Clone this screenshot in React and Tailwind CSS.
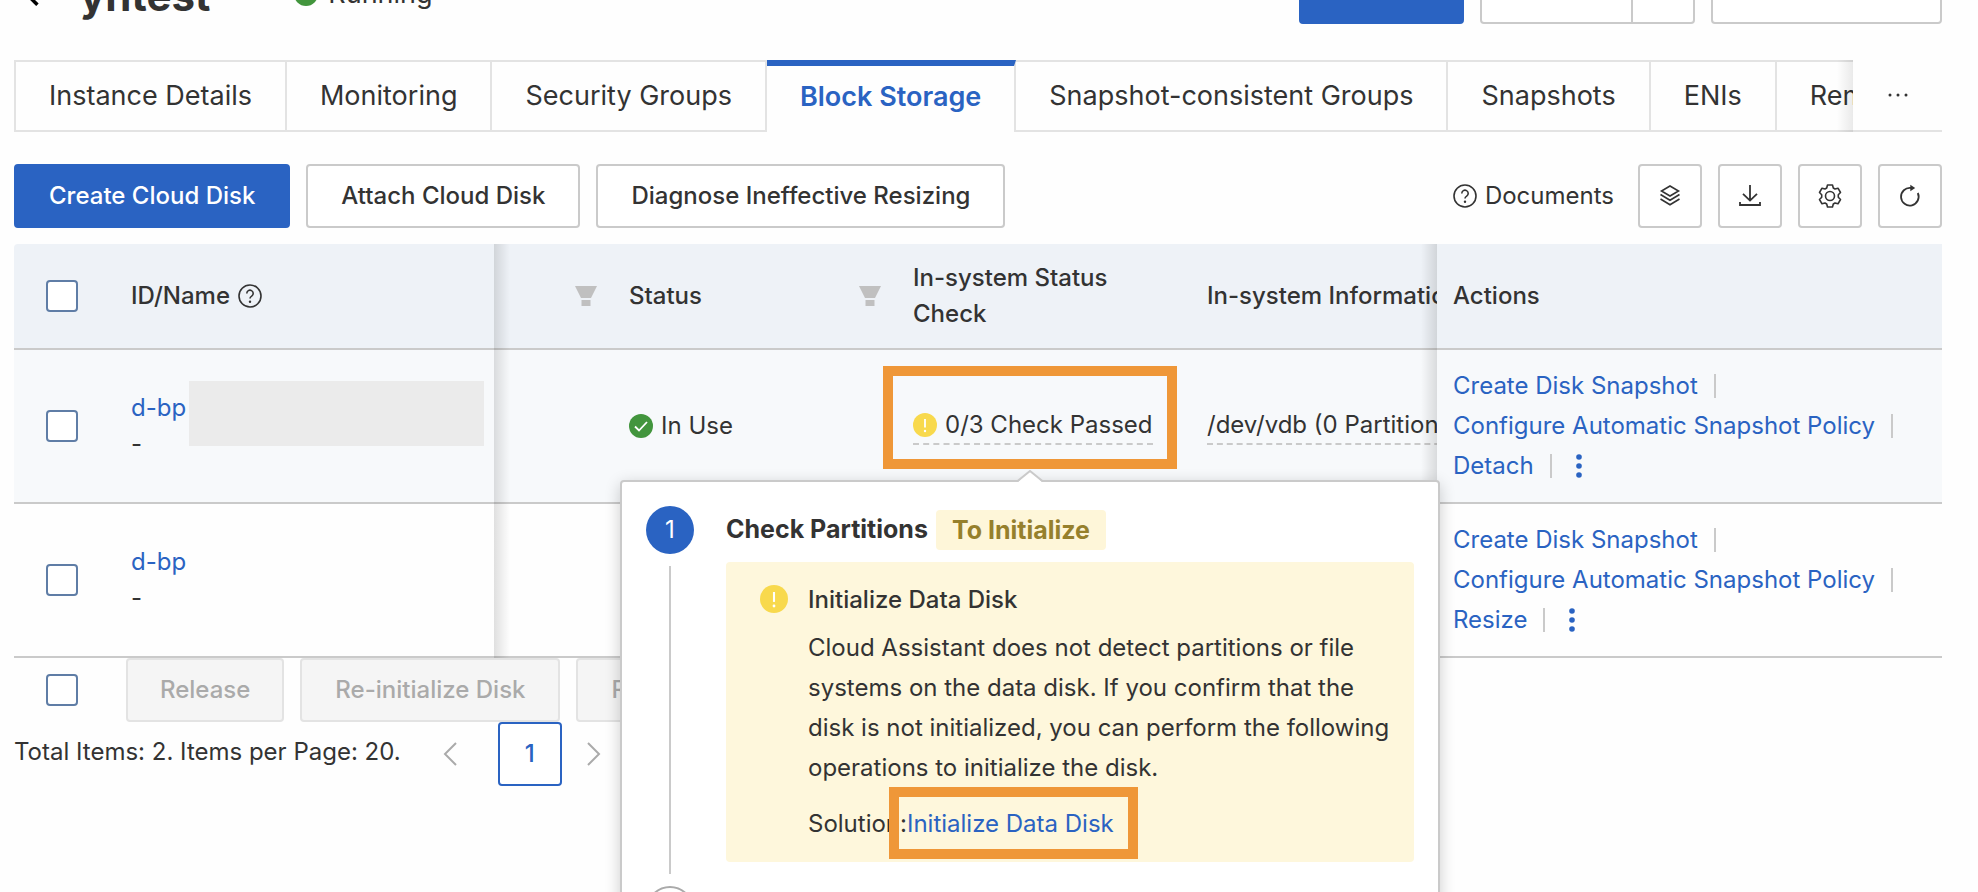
import clsx from 'clsx';

const TABS = [
  'Instance Details',
  'Monitoring',
  'Security Groups',
  'Block Storage',
  'Snapshot-consistent Groups',
  'Snapshots',
  'ENIs',
  'Remote Connection',
];

const DISKS = [
  { id: 'd-bp', masked: true, status: 'In Use', check: '0/3 Check Passed', info: '/dev/vdb (0 Partitions)', action: 'Detach' },
  { id: 'd-bp', masked: false, action: 'Resize' },
];

const HelpIcon = () => (
  <svg className="size-6 shrink-0" viewBox="0 0 24 24" fill="none" stroke="currentColor" strokeWidth="1.6">
    <circle cx="12" cy="12" r="11" />
    <path d="M8.8 9.4a3.2 3.2 0 1 1 4.9 2.7c-1.1.7-1.7 1.2-1.7 2.4" />
    <circle cx="12" cy="17.8" r="1.2" fill="currentColor" stroke="none" />
  </svg>
);

const LayersIcon = () => (
  <svg className="size-6" viewBox="0 0 24 24" fill="none" stroke="currentColor" strokeWidth="1.6">
    <path d="M12 2 20.5 7 12 12 3.5 7z" />
    <path d="m2.5 10.5 9.5 5.7 9.5-5.7M2.5 15l9.5 5.7 9.5-5.7" />
  </svg>
);

const DownloadIcon = () => (
  <svg className="size-6" viewBox="0 0 24 24" fill="none" stroke="currentColor" strokeWidth="1.8">
    <path d="M12 1v15.5M5 9.8l7 6.8 7-6.8M2 18v3h20v-3" />
  </svg>
);

const GearIcon = () => (
  <svg className="size-6" viewBox="0 0 24 24" fill="none" stroke="currentColor" strokeWidth="1.6" strokeLinejoin="round">
    <path d="M9.5 1h5l.8 3 1.7 1 3-.8 2.5 4.3-2.200 2.200v2.600l2.200 2.200-2.500 4.300-3-.8-1.700 1-.8 3h-5l-.8-3-1.700-1-3 .8-2.500-4.300 2.200-2.200v-2.600L1.500 8.500 4 4.200l3 .8 1.700-1z" />
    <circle cx="12" cy="12" r="4.5" />
  </svg>
);

const RefreshIcon = () => (
  <svg className="size-6" viewBox="0 0 24 24" fill="none" stroke="currentColor" strokeWidth="1.8">
    <path d="M19.8 9A8.800 8.800 0 1 1 13 4" />
    <path d="M12.3.8 17.2 4l-4.9 3.2z" fill="currentColor" stroke="none" />
  </svg>
);

const FilterIcon = () => (
  <svg className="h-5 w-[22px] shrink-0" viewBox="0 0 22 20" fill="#c0c0c0">
    <path d="M0 0h22l-6 12H6z" />
    <path d="M6.5 14h9v6h-9z" />
  </svg>
);

const OkIcon = () => (
  <svg className="size-6 shrink-0" viewBox="0 0 24 24">
    <circle cx="12" cy="12" r="12" fill="#42953d" />
    <path d="m6 12.5 4 4 8-8.5" fill="none" stroke="#fff" strokeWidth="1.8" />
  </svg>
);

const AlertIcon = ({ className }) => (
  <svg className={clsx('shrink-0', className)} viewBox="0 0 24 24">
    <circle cx="12" cy="12" r="12" fill="#f8d94d" />
    <path d="M12 6v8.5" stroke="#fff" strokeWidth="1.8" />
    <circle cx="12" cy="18" r="1.2" fill="#fff" />
  </svg>
);

const Chevron = ({ className, d = 'M13 1 2 12l11 11', strokeWidth = 2 }) => (
  <svg className={className} viewBox="0 0 15 24" fill="none" stroke="currentColor" strokeWidth={strokeWidth}>
    <path d={d} />
  </svg>
);

const Button = ({ primary, className, children, ...rest }) => (
  <button
    type="button"
    className={clsx(
      'flex h-16 shrink-0 items-center justify-center rounded border-2 font-medium whitespace-nowrap',
      primary && 'border-[#2a63c2] bg-[#2a63c2] text-white',
      !primary && !rest.disabled && 'border-[#cacaca] bg-white',
      rest.disabled && 'border-[#e3e3e3] bg-[#f5f5f5] text-[#aaa]',
      className
    )}
    {...rest}
  >
    {children}
  </button>
);

const Checkbox = ({ label }) => (
  <input
    type="checkbox"
    aria-label={label}
    className="block size-8 shrink-0 appearance-none rounded border-2 border-[#5f7da6] bg-white"
  />
);

const Separator = () => <span className="mx-4 h-6 w-0.5 shrink-0 bg-[#cacaca]" />;

const Actions = ({ last }) => (
  <div className="leading-10 text-[#2a63c2]">
    <div className="flex items-center">
      <a href="#snapshot">Create Disk Snapshot</a>
      <Separator />
    </div>
    <div className="flex items-center whitespace-nowrap">
      <a href="#policy">Configure Automatic Snapshot Policy</a>
      <Separator />
    </div>
    <div className="flex items-center">
      <a href="#last">{last}</a>
      <Separator />
      <button type="button" aria-label="More actions" className="ml-2">
        <svg className="h-6 w-[6px]" viewBox="0 0 6 24" fill="currentColor">
          <circle cx="3" cy="3" r="2.8" />
          <circle cx="3" cy="12" r="2.8" />
          <circle cx="3" cy="21" r="2.8" />
        </svg>
      </button>
    </div>
  </div>
);

const PageHeader = () => (
  <header className="-mt-10 flex h-16 items-center pr-9 pl-[22px]">
    <button type="button" aria-label="Back" className="text-black">
      <Chevron className="h-7 w-[18px]" strokeWidth={3} />
    </button>
    <h1 className="ml-10 pt-2 text-[42px] font-bold">yntest</h1>
    <span className="ml-[84px] flex items-center gap-2.5 pt-1 text-[27px]">
      <OkIcon />
      Running
    </span>
    <div className="ml-auto flex gap-4">
      <Button primary className="w-[165px]">Connect</Button>
      <div className="flex">
        <Button className="w-[153px] rounded-r-none">Restart</Button>
        <Button className="-ml-0.5 w-16 rounded-l-none" aria-label="More" />
      </div>
      <Button className="w-[231px]">All Actions</Button>
    </div>
  </header>
);

const TabBar = () => (
  <nav className="mt-9 mr-9 ml-3.5 flex text-[27px]">
    <div className="relative flex min-w-0 flex-1 overflow-hidden border-l-2 border-[#e3e3e3]">
      {TABS.map((tab) => (
        <button
          key={tab}
          type="button"
          className={clsx(
            'flex h-[72px] shrink-0 items-center border-r-2 border-[#e3e3e3] px-[33px] whitespace-nowrap',
            tab === 'Block Storage'
              ? 'border-t-[6px] border-t-[#2a63c2] pb-1 font-semibold text-[#2a63c2]'
              : 'border-y-2'
          )}
        >
          {tab}
        </button>
      ))}
      <div className="absolute inset-y-0 right-0 w-4 bg-linear-to-l from-black/8 to-transparent" />
    </div>
    <button type="button" aria-label="More tabs" className="flex h-[72px] w-[89px] items-center justify-center border-b-2 border-[#e3e3e3]">
      <svg className="h-1 w-5" viewBox="0 0 20 4" fill="currentColor">
        <circle cx="2" cy="2" r="1.5" />
        <circle cx="10" cy="2" r="1.5" />
        <circle cx="18" cy="2" r="1.5" />
      </svg>
    </button>
  </nav>
);

const Toolbar = () => (
  <div className="mt-8 mr-9 ml-3.5 flex gap-4">
    <Button primary className="px-[33px]">Create Cloud Disk</Button>
    <Button className="px-[33px]">Attach Cloud Disk</Button>
    <Button className="px-[33px]">Diagnose Ineffective Resizing</Button>
    <div className="ml-auto flex gap-4">
      <a href="#documents" className="mr-2 flex items-center gap-2">
        <HelpIcon />
        Documents
      </a>
      <Button className="w-16" aria-label="Tags"><LayersIcon /></Button>
      <Button className="w-16" aria-label="Export"><DownloadIcon /></Button>
      <Button className="w-16" aria-label="Settings"><GearIcon /></Button>
      <Button className="w-16" aria-label="Refresh"><RefreshIcon /></Button>
    </div>
  </div>
);

const CheckPopover = () => (
  <div
    role="dialog"
    aria-label="Check result"
    className="absolute top-[236px] left-[620px] z-20 w-[820px] rounded border-2 border-[#cacaca] bg-white px-6 pt-6 shadow-[0_4px_16px_rgba(0,0,0,0.2)]"
  >
    <svg className="absolute -top-3 left-[394px] h-3 w-7" viewBox="0 0 28 12">
      <path d="M2 12 14 1l12 11z" fill="#fff" />
      <path d="M1 11.5 14 1l13 10.5" fill="none" stroke="#cacaca" strokeWidth="2" />
    </svg>
    <div className="flex gap-8">
      <div className="flex w-12 shrink-0 flex-col items-center">
        <span className="flex size-12 items-center justify-center rounded-full bg-[#2a63c2] text-white">1</span>
        <span className="my-3 h-[308px] w-0.5 bg-[#cacaca]" />
        <span className="flex size-12 items-center justify-center rounded-full border-2 border-[#aaa]">2</span>
      </div>
      <div className="min-w-0 flex-1">
        <h2 className="mt-1 flex h-10 items-center gap-2 text-[25px] font-bold">
          Check Partitions
          <span className="rounded bg-[#fef6d9] px-4 leading-10 text-[#96802c]">To Initialize</span>
        </h2>
        <div className="mt-3 flex gap-5 rounded bg-[#fef7dc] py-[18px] pr-4 pl-[34px] leading-10">
          <AlertIcon className="mt-[5px] size-7" />
          <div className="min-w-0 flex-1">
            <p className="font-medium">Initialize Data Disk</p>
            <p className="mt-2">
              Cloud Assistant does not detect partitions or file systems on the data disk. If you confirm that the disk is
              not initialized, you can perform the following operations to initialize the disk.
            </p>
            <p className="mt-4">
              Solution:
              <span className="relative">
                <a href="#initialize" className="text-[#2a63c2]">Initialize Data Disk</a>
                <span className="absolute -top-[22px] -right-6 -bottom-[21px] -left-[18px] border-10 border-[#ef9738]" />
              </span>
            </p>
          </div>
        </div>
      </div>
    </div>
  </div>
);

const DiskTable = () => (
  <div className="mt-4 mr-9 ml-3.5">
    <table className="w-full table-fixed border-separate border-spacing-0 text-left leading-9">
      <colgroup>
        <col className="w-[101px]" />
        <col className="w-[379px]" />
        <col className="w-[119px]" />
        <col className="w-[284px]" />
        <col className="w-[294px]" />
        <col />
        <col className="w-[505px]" />
      </colgroup>
      <thead>
        <tr className="h-[106px] bg-[#eef2f7] *:border-b-2 *:border-[#cacaca] *:font-medium">
          <th className="rounded-tl pl-8"><Checkbox label="Select all" /></th>
          <th className="pl-4">
            <span className="flex items-center gap-2">ID/Name <HelpIcon /></span>
          </th>
          <th className="relative">
            <div className="absolute top-0 left-0 z-10 h-[414px] w-4 bg-linear-to-r from-black/12 to-transparent" />
            <div className="flex justify-end pr-4"><FilterIcon /></div>
          </th>
          <th className="pr-4 pl-4">
            <span className="flex items-center justify-between">Status <FilterIcon /></span>
          </th>
          <th className="pr-16 pl-4">In-system Status Check</th>
          <th className="overflow-hidden pl-4 whitespace-nowrap">In-system Information</th>
          <th className="relative pl-4">
            <div className="absolute top-0 right-full h-[414px] w-4 bg-linear-to-l from-black/12 to-transparent" />
            Actions
          </th>
        </tr>
      </thead>
      <tbody>
        {DISKS.map((disk) => (
          <tr key={disk.action} className={clsx('h-[154px] *:border-b-2 *:border-[#cacaca]', disk.masked && 'bg-[#f7f9fb]')}>
            <td className="pl-8"><Checkbox label={disk.id} /></td>
            <td className="relative pl-4">
              <a href="#disk" className="text-[#2a63c2]">{disk.id}</a>
              <div>-</div>
              {disk.masked && <div className="absolute top-[31px] right-2.5 h-[65px] w-[295px] bg-[#ebebeb]" />}
            </td>
            <td />
            <td className="pl-4">
              {disk.status && <span className="flex items-center gap-2"><OkIcon />{disk.status}</span>}
            </td>
            <td className="pl-4">
              {disk.check && (
                <div className="relative flex w-fit items-center gap-2 border-b-2 border-dashed border-[#cacaca] whitespace-nowrap">
                  <AlertIcon className="size-6" />
                  {disk.check}
                  <span className="absolute -top-[41px] -right-6 -bottom-[26px] -left-[30px] border-10 border-[#ef9738]" />
                </div>
              )}
            </td>
            <td className="overflow-hidden pl-4 whitespace-nowrap">
              {disk.info && <div className="w-fit border-b-2 border-dashed border-[#cacaca]">{disk.info}</div>}
            </td>
            <td className="pl-4"><Actions last={disk.action} /></td>
          </tr>
        ))}
      </tbody>
    </table>
  </div>
);

const TableFooter = () => (
  <footer>
    <div className="flex items-center gap-4 pl-[46px]">
      <Checkbox label="Select all rows" />
      <Button disabled className="ml-8 px-8">Release</Button>
      <Button disabled className="px-[33px]">Re-initialize Disk</Button>
      <Button disabled className="px-[33px]">Roll Back</Button>
    </div>
    <div className="flex h-16 items-center pl-3.5">
      <span className="pb-1">Total Items: 2. Items per Page: 20.</span>
      <button type="button" aria-label="Previous page" className="ml-[42px] text-[#aaa]">
        <Chevron className="h-6 w-[15px]" />
      </button>
      <Button className="ml-10 w-16 border-[#2a63c2]! text-[#2a63c2]">1</Button>
      <button type="button" aria-label="Next page" className="ml-6 text-[#aaa]">
        <Chevron className="h-6 w-[15px]" d="m2 1 11 11L2 23" />
      </button>
    </div>
  </footer>
);

export default function App() {
  return (
    <main className="h-screen overflow-hidden bg-[#fefefe] font-['Inter','Liberation_Sans',sans-serif] text-2xl text-[#333]">
      <PageHeader />
      <TabBar />
      <Toolbar />
      <div className="relative">
        <DiskTable />
        <CheckPopover />
      </div>
      <TableFooter />
    </main>
  );
}
